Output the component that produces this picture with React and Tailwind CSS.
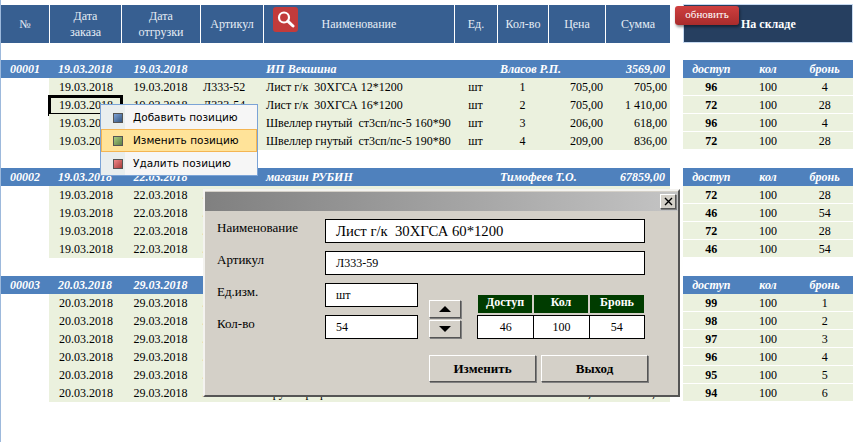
const COLS = "grid grid-cols-[48px_72px_79px_63px_191px_43px_51px_57px_65px] w-[669px]";
const SERIF = "font-['Liberation_Serif','Times_New_Roman',serif]";

const g1 = [
  ["19.03.2018","19.03.2018","Л333-52","Лист г/к  30ХГСА 12*1200","шт","1","705,00","705,00"],
  ["19.03.2018","19.03.2018","Л333-54","Лист г/к  30ХГСА 16*1200","шт","2","705,00","1 410,00"],
  ["19.03.2018","19.03.2018","Л333-55","Швеллер гнутый  ст3сп/пс-5 160*90","шт","3","206,00","618,00"],
  ["19.03.2018","19.03.2018","Л333-56","Швеллер гнутый  ст3сп/пс-5 190*80","шт","4","209,00","836,00"],
];
const g2 = [
  ["19.03.2018","22.03.2018","Л333-57","Лист г/к  30ХГСА 40*1200","шт","2","705,00","1 410,00"],
  ["19.03.2018","22.03.2018","Л333-58","Лист г/к  30ХГСА 50*1200","шт","4","705,00","2 820,00"],
  ["19.03.2018","22.03.2018","Л333-59","Лист г/к  30ХГСА 60*1200","шт","2","705,00","1 410,00"],
  ["19.03.2018","22.03.2018","Л333-60","Лист г/к  30ХГСА 70*1200","шт","4","705,00","2 820,00"],
];
const g3 = [1,2,3,4,5,6].map((n) => ["20.03.2018","29.03.2018","Л333-6"+n,"Труба профильная 60*60*3","шт",String(n),"209,00",(209*n).toFixed(0)+",00"]);

function Group({ head, rows, stock, selected }) {
  return (
    <div className="flex gap-[13px]">
      <div className="w-[669px]">
        <div className={COLS + " h-[18px] bg-[#4f81bd] text-white font-bold italic items-center leading-[18px]"}>
          <div className="text-center">{head[0]}</div>
          <div className="text-center">{head[1]}</div>
          <div className="text-center">{head[2]}</div>
          <div />
          <div className="pl-[3px]">{head[3]}</div>
          <div className="col-span-2 pl-[46px] whitespace-nowrap">{head[4]}</div>
          <div className="col-span-2 text-right pr-[5px]">{head[5]}</div>
        </div>
        {rows.map((r, i) => (
          <div key={i} className={COLS + " h-[18px] leading-[18px] text-black"}>
            <div className={selected === i ? "relative -ml-px" : ""}>
              {selected === i && <div className="absolute left-0 top-0 w-px h-[18px] bg-[#f79646]" />}
            </div>
            <div className="relative bg-[#ebf1de] border-b border-white text-center pl-[2px]">
              {r[0]}
              {selected === i && <div className="absolute left-[-1px] right-[-2px] top-[-1px] bottom-[-2px] border-[3px] border-black" />}
            </div>
            <div className="bg-[#ebf1de] border-b border-white text-center">{r[1]}</div>
            <div className="bg-[#ebf1de] border-b border-white pl-[3px]">{r[2]}</div>
            <div className="bg-[#ebf1de] border-b border-white pl-[3px] whitespace-pre overflow-hidden">{r[3]}</div>
            <div className="bg-[#ebf1de] border-b border-white text-center">{r[4]}</div>
            <div className="bg-[#ebf1de] border-b border-white text-center">{r[5]}</div>
            <div className="bg-[#ebf1de] border-b border-white text-right pr-[2px]">{r[6]}</div>
            <div className="bg-[#ebf1de] border-b border-white text-right pr-[3px]">{r[7]}</div>
          </div>
        ))}
      </div>
      <div className="w-[170px]">
        <div className="grid grid-cols-3 h-[18px] bg-[#4f81bd] text-white font-bold italic text-center leading-[18px]">
          <div>доступ</div><div>кол</div><div>бронь</div>
        </div>
        {stock.map((s, i) => (
          <div key={i} className="grid grid-cols-3 h-[18px] bg-[#ebf1de] border-b border-white text-center leading-[18px]">
            <div className="font-bold">{s[0]}</div><div>100</div><div>{s[1]}</div>
          </div>
        ))}
      </div>
    </div>
  );
}

function HeadCell({ children, first }) {
  return (
    <div className={"flex items-center justify-center text-center text-[12px] leading-[16px] text-[#e6edf5] bg-[#375f91] " + (first ? "" : "border-l border-white")}>
      {children}
    </div>
  );
}

function MenuItem({ label, from, to, active }) {
  return (
    <div className={"flex items-center h-[23px] pt-px " + (active ? "bg-[#ffe399] border border-[#f4b552] -mx-px" : "")}>
      <div className="w-[32px] flex justify-center">
        <span className={"block w-[10px] h-[10px] border border-[#555] bg-gradient-to-br " + from + " " + to} />
      </div>
      <span className="ml-[-1px] whitespace-nowrap">{label}</span>
    </div>
  );
}

function Field({ children, className }) {
  return (
    <div className={"h-[24px] bg-white border border-black pl-[10px] flex items-center " + className}>{children}</div>
  );
}

const bevel = "border border-t-white border-l-white border-r-[#555] border-b-[#555] shadow-[1px_1px_0_#808080]";
const label = "w-[108px] text-[13px] leading-[17px]";

export default function App() {
  return (
    <div className={"relative h-[442px] w-[861px] overflow-hidden bg-white border-l border-[#9db9dc] text-[12px] " + SERIF}>
      <div className="flex gap-[13px] h-[60px] items-start pt-[4px]">
        <div className={COLS + " h-[38px] mt-px"}>
          <HeadCell first>№</HeadCell>
          <HeadCell>Дата<br />заказа</HeadCell>
          <HeadCell>Дата<br />отгрузки</HeadCell>
          <HeadCell>Артикул</HeadCell>
          <HeadCell>
            <div className="relative w-full flex justify-center">
              Наименование
              <div className="absolute left-[9px] top-[-9px] w-[25px] h-[25px] rounded-[3px] bg-[#c23b3b] flex items-center justify-center">
                <svg width="19" height="19" viewBox="0 0 19 19" fill="none" stroke="white">
                  <circle cx="8" cy="7.5" r="5" strokeWidth="2.2" />
                  <path d="M11.8 11.2 L17 16" strokeWidth="3" strokeLinecap="round" />
                </svg>
              </div>
            </div>
          </HeadCell>
          <HeadCell>Ед.</HeadCell>
          <HeadCell>Кол-во</HeadCell>
          <HeadCell>Цена</HeadCell>
          <HeadCell>Сумма</HeadCell>
        </div>
        <div className="w-[170px] h-[39px] bg-[#263f60] border border-[#c6d9f0] flex items-center pl-[57px] text-white font-bold text-[12px]">
          На складе
        </div>
      </div>

      <div className="flex flex-col gap-[18px]">
        <Group head={["00001","19.03.2018","19.03.2018","ИП Векшина","Власов Р.П.","3569,00"]} rows={g1} selected={1}
          stock={[[96,4],[72,28],[96,4],[72,28]]} />
        <Group head={["00002","19.03.2018","22.03.2018","магазин РУБИН","Тимофеев Т.О.","67859,00"]} rows={g2}
          stock={[[72,28],[46,54],[72,28],[46,54]]} />
        <Group head={["00003","20.03.2018","29.03.2018","ООО Сталь","Власов Р.П.","4389,00"]} rows={g3}
          stock={[[99,1],[98,2],[97,3],[96,4],[95,5],[94,6]]} />
      </div>

      {/* обновить */}
      <div className="absolute left-[674px] top-[6px] w-[64px] h-[19px] rounded-[3px] bg-gradient-to-b from-[#cf3f3f] to-[#a92c2c] shadow-[1px_2px_3px_rgba(0,0,0,0.45)] text-white text-[11px] flex items-center justify-center pb-[2px]">
        обновить
      </div>

      {/* context menu */}
      <div className="absolute left-[99px] top-[104px] w-[158px] h-[72px] border border-[#7ba3d6] bg-[#f6f6f6] font-['DejaVu_Sans',sans-serif] text-[10.5px] text-black py-[1px] px-[1px]">
        <div className="absolute left-0 top-0 bottom-0 w-[24px] bg-[#e9eeee]" />
        <div className="relative">
          <MenuItem label="Добавить позицию" from="from-[#7ea3d8]" to="to-[#34557f]" />
          <MenuItem label="Изменить позицию" from="from-[#a8cc80]" to="to-[#5f7f45]" active />
          <MenuItem label="Удалить позицию" from="from-[#f08a8a]" to="to-[#a83a3a]" />
        </div>
      </div>

      {/* dialog */}
      <div className="absolute left-[202px] top-[189px] w-[477px] h-[208px] bg-[#d4d0c8] border-2 border-t-[#f4f3f0] border-l-[#f4f3f0] border-r-[#555] border-b-[#555] text-black">
        <div className="h-[19px] mt-px bg-gradient-to-r from-[#808080] to-[#c4c4c4] flex justify-end items-center pr-[2px]">
          <div className={"w-[16px] h-[15px] bg-[#d4d0c8] flex items-center justify-center " + bevel}>
            <svg width="9" height="9" viewBox="0 0 9 9" stroke="black" strokeWidth="1.4"><path d="M1 1 L8 8 M8 1 L1 8" /></svg>
          </div>
        </div>
        <div className="pl-[12px] pt-[8px]">
          <div className="flex flex-col gap-[8px]">
            <div className="flex">
              <div className={label}>Наименование</div>
              <Field className="w-[320px] text-[14.7px]">Лист г/к&nbsp;&nbsp;30ХГСА 60*1200</Field>
            </div>
            <div className="flex">
              <div className={label}>Артикул</div>
              <Field className="w-[320px] text-[12px]">Л333-59</Field>
            </div>
            <div className="flex">
              <div className="flex flex-col gap-[8px]">
                <div className="flex">
                  <div className={label}>Ед.изм.</div>
                  <Field className="w-[93px] text-[12px]">шт</Field>
                </div>
                <div className="flex">
                  <div className={label}>Кол-во</div>
                  <Field className="w-[93px] text-[12px]">54</Field>
                </div>
              </div>
              <div className="ml-[11px] mt-[17px] flex flex-col gap-[2px] w-[32px]">
                <div className={"h-[18px] flex items-center justify-center " + bevel}>
                  <svg width="12" height="6" viewBox="0 0 12 6"><path d="M6 0 L12 6 L0 6 Z" /></svg>
                </div>
                <div className={"h-[18px] flex items-center justify-center " + bevel}>
                  <svg width="12" height="6" viewBox="0 0 12 6"><path d="M0 0 L12 0 L6 6 Z" /></svg>
                </div>
              </div>
              <div className="ml-[16px] mt-[12px] w-[168px]">
                <div className="flex gap-[2px] pl-px pr-px text-white font-bold text-[12px] text-center">
                  <div className="w-[54px] h-[18px] bg-[#003c00] leading-[14px]">Доступ</div>
                  <div className="w-[54px] h-[18px] bg-[#003c00] leading-[14px]">Кол</div>
                  <div className="w-[54px] h-[18px] bg-[#003c00] leading-[14px]">Бронь</div>
                </div>
                <div className="mt-[2px] grid grid-cols-3 h-[24px] bg-white border border-black text-center leading-[22px]">
                  <div>46</div>
                  <div className="border-l border-black">100</div>
                  <div className="border-l border-black">54</div>
                </div>
              </div>
            </div>
            <div className="flex gap-[5px] ml-[212px] mt-[8px] font-bold text-[13px]">
              <div className={"w-[107px] h-[27px] flex items-center justify-center " + bevel}>Изменить</div>
              <div className={"w-[107px] h-[27px] flex items-center justify-center " + bevel}>Выход</div>
            </div>
          </div>
        </div>
      </div>
    </div>
  );
}
